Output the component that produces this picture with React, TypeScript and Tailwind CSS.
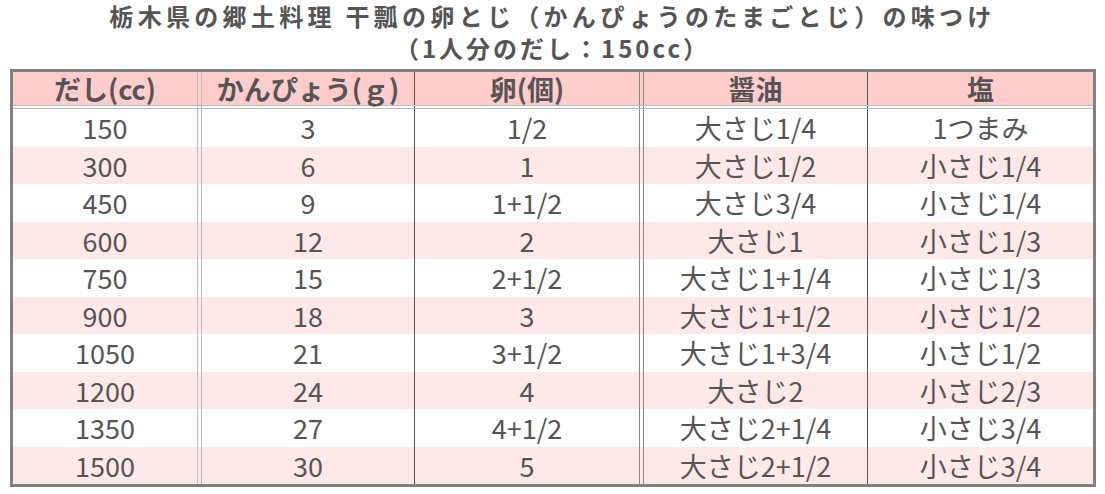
import React from 'react';

const rows: string[][] = [
  ['150', '3', '1/2', '大さじ1/4', '1つまみ'],
  ['300', '6', '1', '大さじ1/2', '小さじ1/4'],
  ['450', '9', '1+1/2', '大さじ3/4', '小さじ1/4'],
  ['600', '12', '2', '大さじ1', '小さじ1/3'],
  ['750', '15', '2+1/2', '大さじ1+1/4', '小さじ1/3'],
  ['900', '18', '3', '大さじ1+1/2', '小さじ1/2'],
  ['1050', '21', '3+1/2', '大さじ1+3/4', '小さじ1/2'],
  ['1200', '24', '4', '大さじ2', '小さじ2/3'],
  ['1350', '27', '4+1/2', '大さじ2+1/4', '小さじ3/4'],
  ['1500', '30', '5', '大さじ2+1/2', '小さじ3/4'],
];

const headers = ['だし(cc)', 'かんぴょう(ｇ)', '卵(個)', '醤油', '塩'];

// cells laid out in one row, separators drawn as borders + 3px gaps
const Cells: React.FC<{ values: string[] }> = ({ values }) => (
  <>
    <div className="w-[185px] shrink-0 border-r border-[#bbbbbb] flex items-center justify-center">{values[0]}</div>
    <div className="w-[3px] shrink-0" />
    <div className="w-[214px] shrink-0 border-l border-r border-l-[#bbbbbb] border-r-[#555555] flex items-center justify-center">{values[1]}</div>
    <div className="w-[225px] shrink-0 border-r border-[#888888] flex items-center justify-center">{values[2]}</div>
    <div className="w-[3px] shrink-0" />
    <div className="w-[225px] shrink-0 border-l border-r border-l-[#888888] border-r-[#555555] flex items-center justify-center">{values[3]}</div>
    <div className="w-[225px] shrink-0 flex items-center justify-center">{values[4]}</div>
  </>
);

export default function App() {
  return (
    <div
      className="w-[1105px] h-[494px] bg-white text-[#555555] px-[10px]"
      style={{ fontFamily: '"Noto Sans CJK JP", "Noto Sans", sans-serif' }}
    >
      <div className="text-center font-bold text-[24px] leading-[32px]">
        <div className="tracking-[4.3px]">栃木県の郷土料理 干瓢の卵とじ（かんぴょうのたまごとじ）の味つけ</div>
        <div className="tracking-[3px]">（1人分のだし：150cc）</div>
      </div>
      <div className="mt-[5px] w-[1086px] border-[3px] border-[#808080]">
        <div className="flex h-[34px] bg-[#ffcccc] border-b border-[#bbbbbb] font-bold text-[27px] leading-none">
          <Cells values={headers} />
        </div>
        <div className="flex h-[2px] bg-white">
          <Cells values={['', '', '', '', '']} />
        </div>
        <div className="h-px bg-[#bbbbbb]" />
        {rows.map((r, i) => (
          <div
            key={r[0]}
            className={`flex h-[37.5px] text-[27px] leading-none ${i % 2 === 0 ? 'bg-white' : 'bg-[#ffe8e8]'}`}
          >
            <Cells values={r} />
          </div>
        ))}
      </div>
    </div>
  );
}
